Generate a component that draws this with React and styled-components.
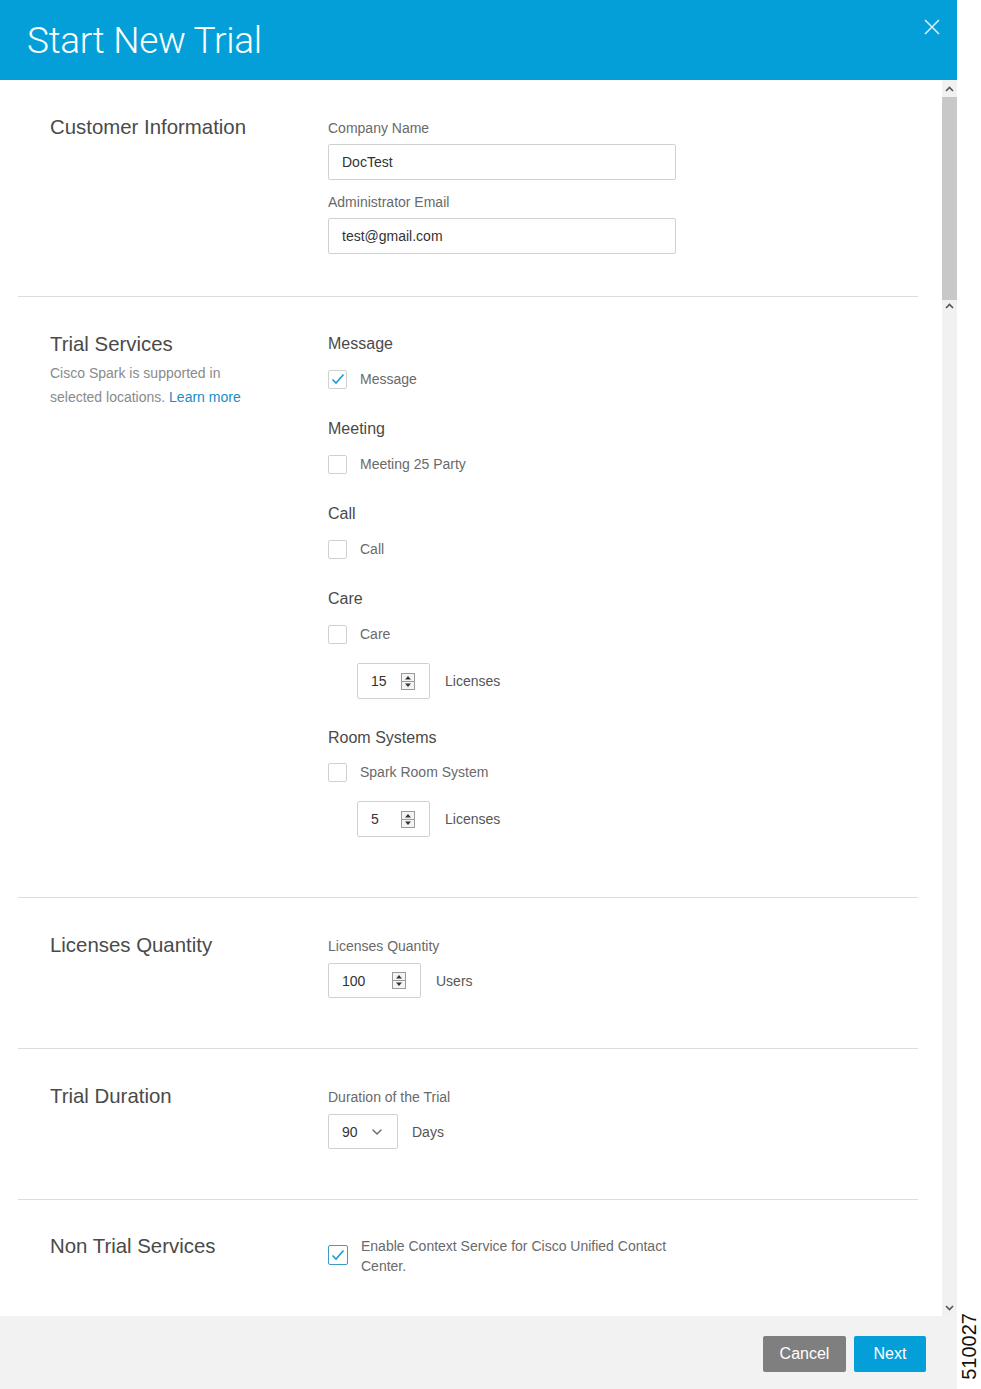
import React from 'react';
import styled, { createGlobalStyle } from 'styled-components';
import { ChevronDown } from 'lucide-react';

const GlobalStyle = createGlobalStyle`
  body {
    margin: 0;
    background: #fff;
    font-family: "Liberation Sans", Arial, sans-serif;
  }
`;

const Page = styled.div`
  display: flex;
  width: 981px;
  height: 1389px;
  overflow: hidden;
`;

const Modal = styled.div`
  width: 957px;
  height: 1389px;
  display: flex;
  flex-direction: column;
`;

const Header = styled.header`
  height: 80px;
  flex: none;
  background: #049fd9;
  display: flex;
  justify-content: space-between;
  padding: 0 17px 0 27px;
`;

const Title = styled.h1`
  margin: 0;
  align-self: center;
  font-family: Roboto, "Liberation Sans", sans-serif;
  font-weight: 300;
  font-size: 37px;
  color: #fff;
  letter-spacing: -0.3px;
`;

const Close = styled.button`
  border: 0;
  background: none;
  padding: 0;
  margin-top: 19px;
  width: 16px;
  height: 16px;
  svg { display: block; }
`;

const Body = styled.div`
  flex: 1;
  min-height: 0;
  display: flex;
`;

const Content = styled.div`
  flex: 1;
  overflow: hidden;
  padding: 0 24px 0 18px;
`;

const Scrollbar = styled.div`
  width: 15px;
  flex: none;
  background: #f1f1f1;
  display: flex;
  flex-direction: column;
  align-items: center;
`;

const Arrow = styled.div`
  height: ${p => p.h}px;
  width: 15px;
  display: flex;
  align-items: center;
  justify-content: center;
  flex: none;
`;

const Thumb = styled.div`
  width: 15px;
  height: 203px;
  background: #c8c8c8;
  flex: none;
`;

const Spacer = styled.div`
  flex: 1;
`;

const Section = styled.section`
  display: grid;
  grid-template-columns: 278px 1fr;
  padding: ${p => p.top}px 0 ${p => p.bottom}px 32px;
  border-bottom: ${p => (p.last ? 'none' : '1px solid #dcdcdc')};
`;

const SectionTitle = styled.h2`
  margin: ${p => p.mt || 0}px 0 0;
  font-size: 20.4px;
  line-height: 20px;
  font-weight: normal;
  color: #4a4a4a;
`;

const SectionNote = styled.p`
  margin: 7px 0 0;
  max-width: 205px;
  font-size: 14px;
  line-height: 24px;
  color: #8a8a8a;
  a {
    color: #1a8cc4;
    text-decoration: none;
  }
`;

const Column = styled.div`
  display: flex;
  flex-direction: column;
  align-items: flex-start;
`;

const Label = styled.label`
  font-size: 14px;
  line-height: 20px;
  color: #6a6a6a;
  margin-top: ${p => p.mt || 0}px;
`;

const TextInput = styled.div`
  width: 348px;
  height: 36px;
  box-sizing: border-box;
  margin-top: 6px;
  border: 1px solid #d0d0d0;
  border-radius: 2px;
  padding: 0 13px;
  display: flex;
  align-items: center;
  font-size: 14px;
  color: #333;
`;

const GroupTitle = styled.h3`
  margin: ${p => p.mt || 0}px 0 0;
  font-size: 16px;
  line-height: 20px;
  font-weight: normal;
  color: #4a4a4a;
`;

const CheckRow = styled.div`
  display: flex;
  align-items: ${p => (p.top ? 'flex-start' : 'center')};
  gap: 13px;
  margin-top: ${p => p.mt || 0}px;
  font-size: 14px;
  line-height: 20px;
  color: #6a6a6a;
`;

const Box = styled.span`
  width: ${p => (p.strong ? 20 : 19)}px;
  height: ${p => (p.strong ? 20 : 19)}px;
  box-sizing: border-box;
  flex: none;
  border: ${p => (p.strong ? '1.5px solid #3c9cc2' : '1px solid #d0d0d0')};
  border-radius: 2px;
  background: #fff;
  display: flex;
  align-items: center;
  justify-content: center;
  margin-top: ${p => p.mt || 0}px;
`;

const CheckText = styled.span`
  max-width: 330px;
`;

const FieldRow = styled.div`
  display: flex;
  align-items: center;
  gap: ${p => p.gap || 15}px;
  margin-top: ${p => p.mt || 0}px;
  margin-left: ${p => p.ml || 0}px;
  font-size: 14px;
  color: #555;
`;

const NumberBox = styled.div`
  width: ${p => p.w}px;
  height: ${p => p.h || 36}px;
  box-sizing: border-box;
  border: 1px solid #d0d0d0;
  border-radius: 2px;
  display: flex;
  align-items: center;
  justify-content: space-between;
  padding: 0 ${p => p.pr || 14}px 0 13px;
  font-size: 14px;
  color: #333;
  svg { display: block; }
`;

const Footer = styled.footer`
  height: 73px;
  flex: none;
  background: #f2f2f3;
  display: flex;
  justify-content: flex-end;
  align-items: flex-start;
  gap: 8px;
  padding: 20px 31px 0 0;
  box-sizing: border-box;
`;

const Button = styled.button`
  height: 36px;
  width: ${p => p.w}px;
  border: 0;
  border-radius: 2px;
  background: ${p => (p.primary ? '#049fd9' : '#7f7f7f')};
  color: #fff;
  font-family: "Liberation Sans", Arial, sans-serif;
  font-size: 16px;
  padding: 0;
`;

const Side = styled.div`
  flex: 1;
  display: flex;
  flex-direction: column;
  justify-content: flex-end;
  align-items: center;
  padding-bottom: 9px;
`;

const FigureId = styled.span`
  writing-mode: vertical-rl;
  transform: rotate(180deg);
  font-size: 20px;
  line-height: 20px;
  color: #111;
`;

const Check = () => (
  <svg width="14" height="12" viewBox="0 0 14 12">
    <polyline points="1.5,6.5 5,10 12.5,1.5" fill="none" stroke="#1a9bd6" strokeWidth="1.6" />
  </svg>
);

const Spinner = () => (
  <svg width="14" height="17" viewBox="0 0 14 17">
    <rect x="0.5" y="0.5" width="13" height="16" fill="#f4f4f4" stroke="#9a9a9a" />
    <line x1="1" y1="8.5" x2="13" y2="8.5" stroke="#9a9a9a" />
    <polygon points="4,6.5 10,6.5 7,3" fill="#333" />
    <polygon points="4,10.5 10,10.5 7,14" fill="#333" />
  </svg>
);

const Chevron = ({ up }) => (
  <svg width="9" height="6" viewBox="0 0 9 6">
    <polyline
      points={up ? '1,5 4.5,1.5 8,5' : '1,1 4.5,4.5 8,1'}
      fill="none"
      stroke="#555"
      strokeWidth="1.6"
    />
  </svg>
);

const Checkbox = ({ checked, children, mt }) => (
  <CheckRow mt={mt}>
    <Box>{checked && <Check />}</Box>
    <CheckText>{children}</CheckText>
  </CheckRow>
);

const Licenses = ({ value, mt }) => (
  <FieldRow mt={mt} ml={29}>
    <NumberBox w={73}>
      <span>{value}</span>
      <Spinner />
    </NumberBox>
    <span>Licenses</span>
  </FieldRow>
);

const App = () => {
  return (
    <Page>
      <GlobalStyle />
      <Modal>
        <Header>
          <Title>Start New Trial</Title>
          <Close aria-label="Close">
            <svg width="16" height="16" viewBox="0 0 16 16">
              <path d="M1 1L15 15M15 1L1 15" stroke="#d6eef8" strokeWidth="1.6" />
            </svg>
          </Close>
        </Header>
        <Body>
          <Content>
            <Section top={38} bottom={42}>
              <SectionTitle mt={-1}>Customer Information</SectionTitle>
              <Column>
                <Label>Company Name</Label>
                <TextInput>DocTest</TextInput>
                <Label mt={12}>Administrator Email</Label>
                <TextInput>test@gmail.com</TextInput>
              </Column>
            </Section>

            <Section top={37} bottom={60}>
              <div>
                <SectionTitle>Trial Services</SectionTitle>
                <SectionNote>
                  Cisco Spark is supported in selected locations.{' '}
                  <a href="#">Learn more</a>
                </SectionNote>
              </div>
              <Column>
                <GroupTitle>Message</GroupTitle>
                <Checkbox checked mt={15}>Message</Checkbox>
                <GroupTitle mt={30}>Meeting</GroupTitle>
                <Checkbox mt={15}>Meeting 25 Party</Checkbox>
                <GroupTitle mt={30}>Call</GroupTitle>
                <Checkbox mt={15}>Call</Checkbox>
                <GroupTitle mt={30}>Care</GroupTitle>
                <Checkbox mt={15}>Care</Checkbox>
                <Licenses value="15" mt={19} />
                <GroupTitle mt={29}>Room Systems</GroupTitle>
                <Checkbox mt={14}>Spark Room System</Checkbox>
                <Licenses value="5" mt={19} />
              </Column>
            </Section>

            <Section top={38} bottom={50}>
              <SectionTitle mt={-1}>Licenses Quantity</SectionTitle>
              <Column>
                <Label>Licenses Quantity</Label>
                <FieldRow mt={7}>
                  <NumberBox w={93} h={35}>
                    <span>100</span>
                    <Spinner />
                  </NumberBox>
                  <span>Users</span>
                </FieldRow>
              </Column>
            </Section>

            <Section top={38} bottom={50}>
              <SectionTitle mt={-1}>Trial Duration</SectionTitle>
              <Column>
                <Label>Duration of the Trial</Label>
                <FieldRow mt={7} gap={14}>
                  <NumberBox w={70} h={35} pr={12}>
                    <span>90</span>
                    <ChevronDown size={16} color="#666" strokeWidth={2} />
                  </NumberBox>
                  <span>Days</span>
                </FieldRow>
              </Column>
            </Section>

            <Section top={36} bottom={40} last>
              <SectionTitle>Non Trial Services</SectionTitle>
              <Column>
                <CheckRow top>
                  <Box strong mt={9}>
                    <Check />
                  </Box>
                  <CheckText>Enable Context Service for Cisco Unified Contact Center.</CheckText>
                </CheckRow>
              </Column>
            </Section>
          </Content>
          <Scrollbar>
            <Arrow h={17}><Chevron up /></Arrow>
            <Thumb />
            <Arrow h={12}><Chevron up /></Arrow>
            <Spacer />
            <Arrow h={17}><Chevron /></Arrow>
          </Scrollbar>
        </Body>
        <Footer>
          <Button w={83}>Cancel</Button>
          <Button w={72} primary>Next</Button>
        </Footer>
      </Modal>
      <Side>
        <FigureId>510027</FigureId>
      </Side>
    </Page>
  );
};

export default App;
